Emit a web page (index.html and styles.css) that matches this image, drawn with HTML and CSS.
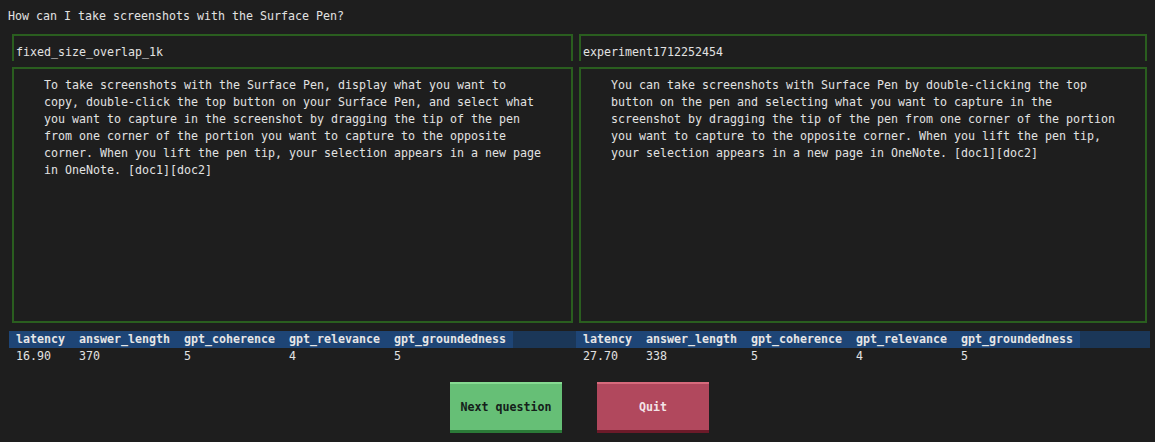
FILE: index.html
```html
<!DOCTYPE html>
<html lang="en">
<head>
<meta charset="utf-8">
<title>Experiment comparison</title>
<link rel="stylesheet" href="styles.css">
</head>
<body>
  <div class="question">How can I take screenshots with the Surface Pen?</div>
  <div class="panels">
    <section class="panel panel-left">
      <div class="label-box">fixed_size_overlap_1k</div>
      <div class="answer-box">
        <p class="answer">To take screenshots with the Surface Pen, display what you want to<br>copy, double-click the top button on your Surface Pen, and select what<br>you want to capture in the screenshot by dragging the tip of the pen<br>from one corner of the portion you want to capture to the opposite<br>corner. When you lift the pen tip, your selection appears in a new page<br>in OneNote. [doc1][doc2]</p>
      </div>
      <div class="metrics">
        <div class="metrics-head">
          <span class="cell c1">latency</span><span class="cell c2">answer_length</span><span class="cell c3">gpt_coherence</span><span class="cell c4">gpt_relevance</span><span class="cell c5">gpt_groundedness</span>
        </div>
        <div class="metrics-vals">
          <span class="cell c1">16.90</span><span class="cell c2">370</span><span class="cell c3">5</span><span class="cell c4">4</span><span class="cell c5">5</span>
        </div>
      </div>
    </section>
    <section class="panel panel-right">
      <div class="label-box">experiment1712252454</div>
      <div class="answer-box">
        <p class="answer">You can take screenshots with Surface Pen by double-clicking the top<br>button on the pen and selecting what you want to capture in the<br>screenshot by dragging the tip of the pen from one corner of the portion<br>you want to capture to the opposite corner. When you lift the pen tip,<br>your selection appears in a new page in OneNote. [doc1][doc2]</p>
      </div>
      <div class="metrics">
        <div class="metrics-head">
          <span class="cell c1">latency</span><span class="cell c2">answer_length</span><span class="cell c3">gpt_coherence</span><span class="cell c4">gpt_relevance</span><span class="cell c5">gpt_groundedness</span>
        </div>
        <div class="metrics-vals">
          <span class="cell c1">27.70</span><span class="cell c2">338</span><span class="cell c3">5</span><span class="cell c4">4</span><span class="cell c5">5</span>
        </div>
      </div>
    </section>
  </div>
  <div class="actions">
    <button class="btn btn-next">Next question</button>
    <button class="btn btn-quit">Quit</button>
  </div>
</body>
</html>
```

FILE: styles.css
```css
html, body {
  margin: 0;
  padding: 0;
}

body {
  background: #1e1e1e;
  color: #e2e2e2;
  font-family: "DejaVu Sans Mono", "Liberation Mono", monospace;
  font-size: 11.63px;
  line-height: 17px;
  width: 1155px;
  height: 442px;
  overflow: hidden;
}

.question {
  padding: 8px 8px 0 8px;
  height: 17px;
}

.panels {
  display: grid;
  grid-template-columns: 568px 574px;
  padding-left: 8px;
  margin-top: 9px;
}

.panel {
  display: flex;
  flex-direction: column;
}

.label-box {
  border: 2px solid #2a5e1f;
  border-bottom: none;
  height: 17px;
  padding: 8px 2px 0 2px;
  margin: 0 3px 0 4px;
}

.panel-right .label-box,
.panel-right .answer-box {
  margin-left: 3px;
}

.answer-box {
  border: 2px solid #2a5e1f;
  margin: 6px 3px 0 4px;
  height: 252px;
  box-sizing: content-box;
  padding: 0;
}

.answer {
  margin: 0;
  padding: 8px 0 0 30px;
}

.metrics {
  margin-top: 8px;
}

.metrics-head,
.metrics-vals {
  display: flex;
  height: 17px;
}

.metrics-head {
  background: #1b3758;
  font-weight: bold;
  color: #e6e6e6;
}

.panel-left .metrics-head,
.panel-left .metrics-vals {
  margin-left: 1px;
}

.metrics-head .cell {
  background: #1e4576;
}

.cell {
  display: block;
  padding-left: 7px;
  box-sizing: border-box;
  white-space: nowrap;
}

.c1 { width: 63px; }
.c2 { width: 105px; }
.c3 { width: 105px; }
.c4 { width: 105px; }
.c5 { width: 126px; }

.actions {
  display: flex;
  justify-content: center;
  gap: 35px;
  padding-left: 4px;
  margin-top: 17px;
}

.btn {
  width: 112px;
  height: 51px;
  box-sizing: border-box;
  font-family: "DejaVu Sans Mono", "Liberation Mono", monospace;
  font-size: 11.63px;
  font-weight: bold;
  line-height: 17px;
  padding: 0;
  border: none;
  border-top: 2px solid;
  border-bottom: 3px solid;
  cursor: pointer;
}

.btn-next {
  background: #66bf76;
  color: #14201a;
  border-top-color: #86da92;
  border-bottom-color: #2b7a38;
}

.btn-quit {
  background: #b1485d;
  color: #f3e3e7;
  border-top-color: #d76a7c;
  border-bottom-color: #6c1a29;
}
```
